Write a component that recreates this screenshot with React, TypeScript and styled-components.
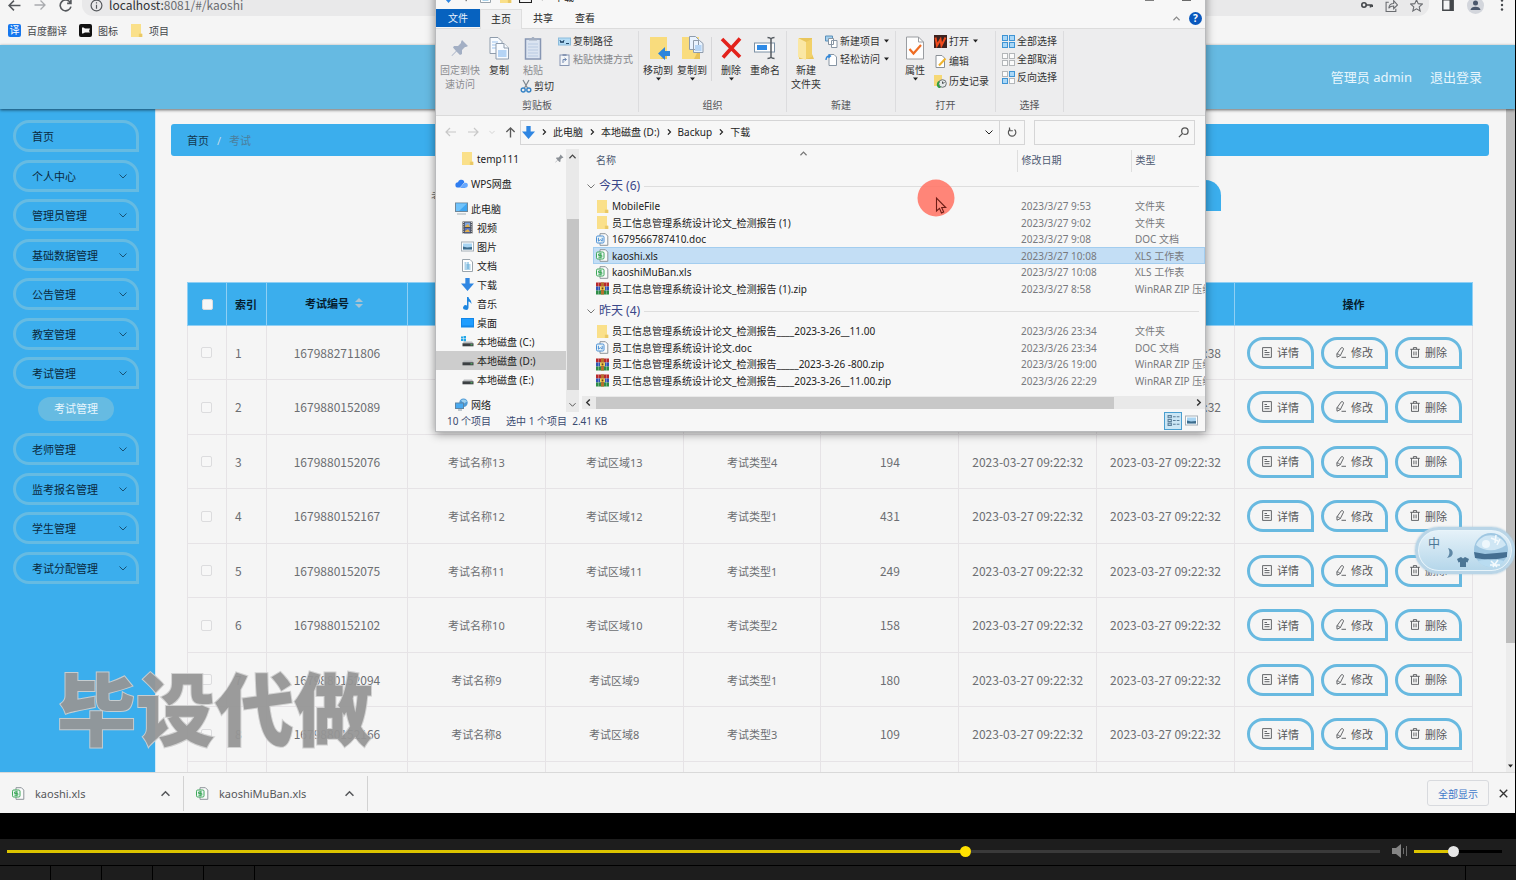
import React from "react";
import styled, { createGlobalStyle, css } from "styled-components";

const uiFont = `"Noto Sans", "Noto Sans CJK SC", sans-serif`;
const numberFont = `"Noto Sans CJK SC", "Noto Sans", sans-serif`;

const color = {
  page: "#f5f5f5",
  header: "#66bae2",
  blue: "#3baeed",
  ring: "#66bbe2",
  line: "#e6e3e6",
  text: "#6c6e72",
  win: "#f7f7f7",
};

const Global = createGlobalStyle`
  * { box-sizing: border-box; }
  html, body { margin: 0; padding: 0; background: #000; }
  body { font-family: ${uiFont}; font-size: 11px; color: #333; }
  button, input { font: inherit; color: inherit; margin: 0; padding: 0; }
  button { background: none; border: 0; }
  a { color: inherit; text-decoration: none; }
  ul, ol { list-style: none; margin: 0; padding: 0; }
  svg { display: block; flex: none; }
`;

/* ---------- page frame ---------- */

const Screen = styled.div`
  height: 100vh;
  display: flex;
  flex-direction: column;
  background: #000;
`;

const Stage = styled.div`
  position: relative;
  flex: 1;
  min-height: 0;
  overflow: hidden;
  display: flex;
  flex-direction: column;
  margin-right: 1px;
  background: ${color.page};
`;

/* ---------- browser ---------- */

const Toolbar = styled.div`
  flex: none;
  display: flex;
  align-items: center;
  height: 22px;
  margin-top: -6px;
  padding: 0 8px 0 8px;
  gap: 13px;
  color: #55585c;
`;

const AddressPill = styled.div`
  flex: 1;
  display: flex;
  align-items: center;
  gap: 6px;
  height: 22px;
  padding: 0 6px 0 8px;
  margin-left: -3px;
  border-radius: 0 0 11px 11px;
  background: #e9e9ea;
  font: 12px/16px ${numberFont};
  color: #6a6c70;
`;

const HostName = styled.span`
  color: #303235;
`;

const PillIcons = styled.div`
  margin-left: auto;
  display: flex;
  align-items: center;
  gap: 12px;
`;

const Avatar = styled.span`
  display: grid;
  place-items: center;
  width: 17px;
  height: 17px;
  border-radius: 50%;
  background: #d3d6dc;
  color: #49566b;
`;

const Bookmarks = styled.nav`
  flex: none;
  display: flex;
  align-items: center;
  gap: 12px;
  height: 29px;
  padding: 0 8px;
`;

const Bookmark = styled.a`
  display: flex;
  align-items: center;
  gap: 6px;
  font-size: 10px;
  color: #44474b;
`;

const AppHeader = styled.header`
  flex: none;
  position: relative;
  display: flex;
  align-items: center;
  justify-content: flex-end;
  gap: 18px;
  height: 64px;
  padding: 0 33px 2px 0;
  background: ${color.header};
  box-shadow: 0 1px 3px rgba(0, 0, 0, 0.6);
  color: #e8f6fd;
  font-size: 13px;
`;

const AppBody = styled.div`
  flex: 1;
  min-height: 0;
  display: flex;
  overflow: hidden;
`;

/* ---------- sidebar ---------- */

const Sidebar = styled.nav`
  flex: none;
  width: 156px;
  padding: 11px 16px 0 13px;
  background: ${color.blue};
  border-right: 1px solid #cfe9f8;
`;

const MenuItem = styled.li`
  margin-bottom: 8px;
  &:nth-child(even) {
    margin-bottom: 7px;
  }
`;

const MenuButton = styled.button`
  display: flex;
  align-items: center;
  justify-content: space-between;
  width: 100%;
  height: 32px;
  padding: 0 9px 1px 16px;
  border: 3px solid ${color.ring};
  border-radius: 16px 16px 0 16px;
  color: #0a2a40;
  & > svg {
    opacity: 0.7;
  }
`;

const SubLink = styled.a`
  display: block;
  width: 76px;
  height: 24px;
  margin: 6px auto 12px 25px;
  border-radius: 12px;
  background: ${color.ring};
  color: #e8f6fd;
  line-height: 24px;
  text-align: center;
`;

/* ---------- main column ---------- */

const Main = styled.main`
  flex: 1;
  min-width: 0;
  padding: 15px 17px 0 15px;
`;

const Crumbs = styled.div`
  display: flex;
  align-items: center;
  gap: 8px;
  height: 32px;
  padding: 0 16px;
  border-radius: 3px;
  background: ${color.blue};
  color: #4b7f9e;
`;

const CrumbHome = styled.a`
  color: #14384f;
`;

const CrumbSlash = styled.span`
  color: #c3dcea;
`;

const SearchForm = styled.form`
  display: flex;
  align-items: center;
  justify-content: center;
  gap: 12px;
  margin: 24px 8px 71px 0;
  height: 31px;
  color: ${color.text};
`;

const SearchField = styled.input`
  width: 660px;
  height: 31px;
  border: 1px solid #dcdfe6;
  background: #fff;
`;

const SearchButton = styled.button`
  width: 84px;
  height: 31px;
  border-radius: 16px 16px 0 16px;
  background: ${color.blue};
`;

const DataTable = styled.table`
  width: calc(100% - 32px);
  margin: 0 16px;
  table-layout: fixed;
  border-collapse: collapse;
  color: ${color.text};
  text-align: center;
`;

const HeadCell = styled.th<{ $left?: boolean }>`
  height: 43px;
  padding: 0 8px;
  background: ${color.blue};
  border: 1px solid #8fcff4;
  color: #06202f;
  text-align: ${(p) => (p.$left ? "left" : "center")};
  white-space: nowrap;
`;

const HeadLabel = styled.span`
  display: inline-flex;
  align-items: center;
  gap: 6px;
  padding: 0 6px 2px 0;
`;

const BodyRow = styled.tr`
  height: 54px;
  &:nth-child(even) {
    height: 55px;
  }
`;

const Cell = styled.td<{ $left?: boolean; $numeric?: boolean }>`
  padding: 0 8px;
  border: 1px solid ${color.line};
  text-align: ${(p) => (p.$left ? "left" : "center")};
  white-space: nowrap;
  ${(p) =>
    p.$numeric &&
    css`
      font: 12px/16px ${numberFont};
    `}
`;

const TickCell = styled(Cell)`
  padding: 0 10px 0 8px;
`;

const ActionCell = styled(Cell)`
  padding: 0 0 0 12px;
`;

const Tick = styled.input`
  appearance: none;
  display: block;
  width: 11px;
  height: 11px;
  margin: 0 auto;
  border: 1px solid #dcdcde;
  border-radius: 2px;
  background: #f7f7f7;
`;

const Actions = styled.div`
  display: flex;
  gap: 7px;
`;

const ActionButton = styled.button`
  display: flex;
  align-items: center;
  justify-content: center;
  gap: 5px;
  width: 67px;
  height: 32px;
  padding-bottom: 1px;
  border: 3px solid #68b9e0;
  border-radius: 16px 16px 0 16px;
  color: #55575a;
`;

const PageScroll = styled.div`
  flex: none;
  display: flex;
  flex-direction: column;
  justify-content: space-between;
  align-items: center;
  width: 9px;
  padding-bottom: 4px;
  background: #ececec;
  color: #444;
`;

const PageThumb = styled.div`
  width: 100%;
  height: 81%;
  background: #bdbdbd;
`;

/* ---------- downloads ---------- */

const Downloads = styled.footer`
  flex: none;
  display: flex;
  align-items: center;
  height: 41px;
  border-top: 1px solid #d9d9d9;
  padding-right: 7px;
`;

const DownloadItem = styled.button`
  display: flex;
  align-items: center;
  gap: 10px;
  width: 184px;
  height: 35px;
  padding: 0 13px 0 12px;
  border-right: 1px solid #d2d2d2;
  color: #55575a;
  & > :last-child {
    margin-left: auto;
  }
`;

const ShowAll = styled.button`
  width: 62px;
  height: 26px;
  margin: 0 10px 0 auto;
  border: 1px solid #d8dade;
  border-radius: 3px;
  font-size: 10px;
  color: #3f78c9;
`;

/* ---------- explorer window ---------- */

const Explorer = styled.section`
  position: absolute;
  left: 435px;
  top: -15px;
  width: 771px;
  height: 447px;
  display: flex;
  flex-direction: column;
  background: ${color.win};
  border: 1px solid #b9babc;
  box-shadow: 0 2px 9px rgba(0, 0, 0, 0.42);
  font-size: 10px;
  line-height: 14px;
  color: #222;
`;

const TitleBar = styled.div`
  flex: none;
  display: flex;
  align-items: center;
  gap: 7px;
  height: 23px;
  padding: 0 14px 2px 6px;
`;

const CaptionIcons = styled.span`
  display: flex;
  gap: 28px;
  margin-left: auto;
`;

const Tabs = styled.div`
  flex: none;
  display: flex;
  align-items: stretch;
  height: 20px;
  padding-right: 3px;
  border-bottom: 1px solid #dcdcdc;
`;

const Tab = styled.button<{ $kind?: "file" | "active" }>`
  width: 42px;
  padding-bottom: 2px;
  ${(p) =>
    p.$kind === "file" &&
    css`
      width: 44px;
      height: 18px;
      padding-bottom: 0;
      background: #0762bf;
      color: #e8f2fc;
    `}
  ${(p) =>
    p.$kind === "active" &&
    css`
      height: 20px;
      background: #efeff0;
      border: 1px solid #dedede;
      border-bottom: 0;
    `}
`;

const TabTools = styled.div`
  display: flex;
  align-items: center;
  gap: 9px;
  margin-left: auto;
  color: #8a8a8a;
`;

const Ribbon = styled.div`
  flex: none;
  display: flex;
  height: 87px;
  padding: 2px 0 3px;
  background: #ededee;
  border-bottom: 1px solid #dadada;
`;

const RibbonGroup = styled.div<{ $width: number }>`
  flex: none;
  display: flex;
  flex-direction: column;
  justify-content: space-between;
  width: ${(p) => p.$width}px;
  border-right: 1px solid #dcdcde;
`;

const RibbonTools = styled.div`
  display: flex;
  padding: 3px 0 0 2px;
`;

const GroupLabel = styled.div`
  text-align: center;
  color: #55565a;
`;

const BigTool = styled.button<{ $width?: number; $dim?: boolean }>`
  display: flex;
  flex-direction: column;
  align-items: center;
  width: ${(p) => p.$width ?? 34}px;
  color: ${(p) => (p.$dim ? "#8b8c90" : "#333")};
  line-height: 14px;
  white-space: nowrap;
  & > svg:first-child {
    margin: 2px 0 3px;
  }
`;

const ToolColumn = styled.div<{ $gap?: number; $inset?: number }>`
  display: flex;
  flex-direction: column;
  align-items: flex-start;
  gap: ${(p) => p.$gap ?? 4}px;
  padding-left: ${(p) => p.$inset ?? 2}px;
`;

const SmallTool = styled.button<{ $dim?: boolean; $indent?: boolean }>`
  display: flex;
  align-items: center;
  gap: 2px;
  height: 14px;
  padding-left: ${(p) => (p.$indent ? 4 : 0)}px;
  line-height: 14px;
  white-space: nowrap;
  color: ${(p) => (p.$dim ? "#85868a" : "#333")};
  & > span + svg {
    margin-left: 2px;
  }
`;

const ToolRule = styled.span`
  width: 1px;
  height: 44px;
  margin: 3px 2px 0;
  background: #d6d6d8;
`;

const AddressRow = styled.div`
  flex: none;
  display: flex;
  align-items: center;
  height: 33px;
  padding: 0 10px 1px 9px;
`;

const NavArrows = styled.div`
  display: flex;
  align-items: center;
  gap: 10px;
  width: 75px;
  color: #c8c8c8;
`;

const PathBox = styled.div`
  flex: 1;
  display: flex;
  align-items: center;
  gap: 6px;
  height: 25px;
  padding-left: 1px;
  border: 1px solid #d5d5d6;
`;

const PathSpring = styled.span`
  flex: 1;
`;

const Refresh = styled.button`
  display: grid;
  place-items: center;
  width: 25px;
  height: 25px;
  border-left: 1px solid #d5d5d6;
  color: #555;
`;

const FindBox = styled.label`
  display: flex;
  align-items: center;
  width: 161px;
  height: 25px;
  margin-left: 9px;
  padding-right: 5px;
  border: 1px solid #d5d5d6;
  color: #555;
`;

const FindInput = styled.input`
  flex: 1;
  min-width: 0;
  height: 20px;
  border: 0;
  background: none;
  outline: 0;
`;

const ExplorerBody = styled.div`
  flex: 1;
  min-height: 0;
  display: flex;
`;

const Tree = styled.ul`
  flex: none;
  width: 130px;
`;

const TreeItem = styled.li<{ $root?: boolean; $active?: boolean }>`
  display: flex;
  align-items: center;
  gap: 3px;
  height: 19px;
  margin-top: ${(p) => (p.$root ? 6 : 0)}px;
  padding: 0 2px 0 ${(p) => (p.$root ? 19 : 25)}px;
  background: ${(p) => (p.$active ? "#cdcdcd" : "none")};
  & > svg:nth-of-type(2) {
    margin-left: auto;
  }
`;

const TreeScroll = styled.div`
  flex: none;
  display: flex;
  flex-direction: column;
  align-items: center;
  justify-content: space-between;
  width: 13px;
  height: 263px;
  padding: 4px 0;
  background: #e9e9e9;
  color: #444;
`;

const TreeThumb = styled.div`
  width: 12px;
  height: 171px;
  margin-top: 48px;
  background: #c5c5c5;
`;

const FilePane = styled.div`
  flex: 1;
  min-width: 0;
  display: flex;
  flex-direction: column;
  justify-content: space-between;
  padding: 1px 0 2px 14px;
`;

const FileTable = styled.table`
  width: 100%;
  table-layout: fixed;
  border-collapse: collapse;
  text-align: left;
`;

const FileHead = styled.th<{ $first?: boolean }>`
  height: 22px;
  padding: 0 4px 2px ${(p) => (p.$first ? 3 : 4)}px;
  border-left: ${(p) => (p.$first ? "0" : "1px solid #dedede")};
  font-weight: 400;
  color: #4d5a72;
`;

const HeadSpread = styled.div`
  display: flex;
  align-items: center;
  height: 14px;
  padding-right: 22px;
  & > svg {
    margin: 0 auto 14px;
    color: #777;
  }
`;

const GroupCell = styled.td`
  height: 26px;
  padding: 2px 0 0;
`;

const GroupToggle = styled.button`
  display: flex;
  align-items: center;
  gap: 4px;
  width: 100%;
  margin-left: -6px;
  font-size: 12px;
  line-height: 16px;
  color: #3a4689;
  white-space: nowrap;
  & > svg {
    color: #777;
  }
  &::after {
    content: "";
    flex: 1;
    height: 1px;
    background: #dedede;
  }
`;

const FileRow = styled.tr<{ $selected?: boolean }>`
  height: 17px;
  background: ${(p) => (p.$selected ? "#c3def5" : "none")};
  box-shadow: ${(p) => (p.$selected ? "inset 0 0 0 1px #a3cdef" : "none")};
  &:nth-child(even) {
    height: 16px;
  }
`;

const FileName = styled.td`
  padding: 0 0 0 3px;
`;

const NameLine = styled.div`
  display: flex;
  align-items: center;
  gap: 3px;
  height: 16px;
  white-space: pre;
`;

const FileMeta = styled.td`
  padding: 0 0 0 4px;
  overflow: hidden;
  color: #77797d;
  line-height: 16px;
  white-space: nowrap;
`;

const FileScroll = styled.div`
  display: flex;
  align-items: center;
  height: 13px;
  margin-left: -11px;
  padding: 0 3px;
  background: #e9e9e9;
  color: #333;
  & > :last-child {
    margin-left: auto;
  }
`;

const FileThumb = styled.div`
  width: 518px;
  height: 12px;
  margin-left: 4px;
  background: #c8c8c8;
`;

const StatusBar = styled.div`
  flex: none;
  display: flex;
  align-items: center;
  height: 20px;
  padding: 0 7px 1px 11px;
  color: #3a4a70;
  white-space: pre;
`;

const StatusText = styled.span`
  margin-right: 15px;
`;

const ViewButtons = styled.div`
  display: flex;
  align-items: center;
  gap: 3px;
  margin-left: auto;
`;

const DetailsView = styled.button`
  display: grid;
  place-items: center;
  width: 18px;
  height: 18px;
  border: 1px solid #4a9fd0;
  background: #cbe6f5;
  color: #5b7f99;
`;

/* ---------- overlays ---------- */

const Pointer = styled.div`
  position: absolute;
  left: 917px;
  top: 179px;
`;

const Watermark = styled.div`
  position: absolute;
  left: 57px;
  bottom: 50px;
  font: 900 79px/114px "Noto Sans CJK SC", sans-serif;
  color: #969696;
  -webkit-text-stroke: 2px #cfcfcf;
  paint-order: stroke fill;
  opacity: 0.94;
`;

const ImeBar = styled.div`
  position: absolute;
  right: 0;
  top: 527px;
  display: flex;
  align-items: center;
  width: 100px;
  height: 47px;
  padding-left: 14px;
  border: 3px solid #b9d5e7;
  border-radius: 24px;
  background: linear-gradient(#e6f2f9, #b4d6ea);
  box-shadow: inset 0 0 0 1px #e8f4fa, 0 0 2px #9fc1d6;
  color: #4c7695;
  overflow: hidden;
`;

const ImeMode = styled.span`
  margin: -16px 1px 0 -4px;
  font-size: 12px;
`;

/* ---------- player ---------- */

const PlayerGap = styled.div`
  flex: none;
  height: 26px;
`;

const PlayerBar = styled.div`
  flex: none;
  display: flex;
  align-items: center;
  height: 26px;
  padding: 0 14px 2px 7px;
  background: #1d1d1d;
`;

const Slider = styled.input<{ $fill: number; $rest: string; $knob: string }>`
  appearance: none;
  height: 12px;
  background: none;
  outline: 0;
  &::-webkit-slider-runnable-track {
    height: 3px;
    background: linear-gradient(
      to right,
      #dcc400 ${(p) => p.$fill}%,
      ${(p) => p.$rest} ${(p) => p.$fill}%
    );
  }
  &::-webkit-slider-thumb {
    appearance: none;
    width: 11px;
    height: 11px;
    margin-top: -4px;
    border-radius: 50%;
    background: ${(p) => p.$knob};
  }
`;

const Progress = styled(Slider)`
  flex: 1;
`;

const Volume = styled(Slider)`
  width: 88px;
  margin-left: 6px;
`;

const VolumeIcon = styled.span`
  margin-left: 12px;
`;

const PlayerFoot = styled.div`
  flex: none;
  display: flex;
  gap: 1px;
  height: 15px;
  padding-top: 1px;
`;

const FootCell = styled.div<{ $grow?: boolean }>`
  ${(p) => (p.$grow ? "flex: 1;" : "width: 50px;")}
  background: #1d1d1d;
`;

/* ---------- icons ---------- */

const Line = ({ d, size = 12, w = 1, box = 12 }: { d: string; size?: number; w?: number; box?: number }) => (
  <svg width={size} height={size} viewBox={`0 0 ${box} ${box}`} fill="none" stroke="currentColor" strokeWidth={w}>
    <path d={d} />
  </svg>
);

const ChevronDown = ({ size = 8 }: { size?: number }) => <Line size={size} box={8} d="M0.5 2.5 4 6 7.5 2.5" />;
const ChevronUp = ({ size = 8 }: { size?: number }) => <Line size={size} box={8} w={1.4} d="M0.5 6 4 2.5 7.5 6" />;
const ChevronRight = ({ size = 6 }: { size?: number }) => <Line size={size} box={8} w={1.6} d="M2.5 0.5 6 4 2.5 7.5" />;
const ChevronLeft = ({ size = 8 }: { size?: number }) => <Line size={size} box={8} w={1.6} d="M5.5 0.5 2 4 5.5 7.5" />;
const Drop = () => (
  <svg width="5" height="4" viewBox="0 0 5 4">
    <path d="M0 0.5h5L2.5 3.5z" fill="#222" />
  </svg>
);

const Folder = ({ size = 12 }: { size?: number }) => (
  <svg width={size} height={size} viewBox="0 0 12 12">
    <path d="M1 0h9v9h1.5v3H1z" fill="#f6d875" />
    <path d="M1 0h9v9H8v3H1z" fill="#fae08a" />
    <path d="M8.500 12V9h2.500v3z" fill="#e9c765" />
  </svg>
);

const OfficeFile = ({ tint, word }: { tint: string; word?: boolean }) => (
  <svg width="13" height="13" viewBox="0 0 13 13" fill="none">
    <path d="M4 .7h5.4l2.4 2.4v9.2H4z" fill="#fbfbfb" stroke="#8d9499" />
    <rect x="0.5" y="3" width="7.5" height="7" rx="1.2" fill="#eef6f6" stroke={tint} />
    <path d={word ? "M2.4 4.8v3.4l1.9-1.5 1.9 1.5V4.8" : "M6 5H2.6v1.5h3.2v1.7H2.4M4.2 4v5.2"} stroke={tint} />
  </svg>
);

const RarFile = () => (
  <svg width="13" height="13" viewBox="0 0 13 13">
    <rect x="0" y="0.5" width="13" height="4" fill="#b8292b" />
    <rect x="0" y="4.5" width="13" height="4" fill="#3154b5" />
    <rect x="0" y="8.5" width="13" height="4" fill="#2f8d46" />
    <rect x="5" y="0.5" width="3" height="12" fill="#b5702c" />
    <rect x="4" y="4.5" width="5" height="3.5" fill="#f1d35a" />
    <rect x="5.6" y="5.4" width="1.8" height="2" fill="#704018" />
    <path d="M2.5.5v12M10.5.5v12" stroke="#fff" strokeOpacity=".3" />
  </svg>
);

const DownArrow = ({ size = 13 }: { size?: number }) => (
  <svg width={size} height={size} viewBox="0 0 12 12">
    <path d="M4 0h4v5h4L6 12 0 5h4z" fill="#2f86e2" />
  </svg>
);

const Cloud = () => (
  <svg width="13" height="13" viewBox="0 0 13 13">
    <path d="M3 10.5a2.6 2.6 0 0 1 0-5.2A3.4 3.4 0 0 1 9 4l1 7z" fill="#2f7df0" />
    <path d="M6 10.8 9 6.2a2.4 2.4 0 0 1 3.8 2.4 2.2 2.2 0 0 1-2 2.2z" fill="#67a9ff" />
    <path d="M4.500 10.800c2-.3 2.500-3.300 4.500-4.800" stroke="#f7f7f7" strokeWidth=".6" fill="none" />
  </svg>
);

const Monitor = () => (
  <svg width="13" height="13" viewBox="0 0 13 13">
    <rect x="0.5" y="1" width="12" height="8.500" fill="#3ea6f2" stroke="#6f8799" />
    <path d="M1 1.500h11L4 9H1z" fill="#70c3fb" />
    <path d="M2 11.500h9v1H2z" fill="#a4b0b9" />
  </svg>
);

const Video = () => (
  <svg width="13" height="13" viewBox="0 0 13 13">
    <rect x="1.500" y="0.500" width="10" height="12" fill="#4a4d55" />
    <rect x="3.800" y="1.500" width="5.400" height="4.500" fill="#7fa5e0" />
    <rect x="3.800" y="7" width="5.400" height="4.500" fill="#5573c4" />
    <path d="M5 4.500l2-1.500 2 3H4zM4 10l3-2 2 3H4z" fill="#e4b04c" />
    <path d="M2.600 1v12M10.400 1v12" stroke="#d6d8dc" strokeDasharray="1 1.200" />
  </svg>
);

const Picture = () => (
  <svg width="13" height="13" viewBox="0 0 13 13">
    <rect x="0.500" y="2" width="12" height="9" fill="#fff" stroke="#a6b0b8" />
    <rect x="2" y="3.500" width="9" height="6" fill="#a8d4f2" />
    <path d="M2 6.500l4 1 5-.5v2.500H2z" fill="#3d6c8c" />
  </svg>
);

const Doc = () => (
  <svg width="13" height="13" viewBox="0 0 13 13" fill="none">
    <path d="M1.500.500h7.500l2.500 2.500v9.500h-10z" fill="#fff" stroke="#9aa4ac" />
    <path d="M3.500 4h2M3.500 6h6M3.500 8h6M3.500 10h6M7 3v7" stroke="#5ba7d6" />
  </svg>
);

const Note = () => (
  <svg width="13" height="13" viewBox="0 0 13 13">
    <path d="M6 0h1.500c.3 2.500 3.500 3 2.800 7-.5-1.800-1.600-2.300-2.800-2.600v6.100a2.700 2.300 0 1 1-1.500-2z" fill="#1e86e0" />
  </svg>
);

const Desktop = () => (
  <svg width="13" height="13" viewBox="0 0 13 13">
    <rect x="0" y="2" width="13" height="9.500" fill="#1286e8" />
    <path d="M1 3h11v6.500H1z" fill="#1f9dff" />
  </svg>
);

const Drive = ({ win }: { win?: boolean }) => (
  <svg width="13" height="13" viewBox="0 0 13 13">
    <path d="M3 6.500h8l1.500 2H1.500z" fill="#b9bcbf" />
    <rect x="1.500" y="8.300" width="11" height="3" fill="#3c4043" />
    <rect x="9.500" y="9.300" width="2" height="1" fill="#58c86c" />
    {win && <path d="M0 1.500h2v2H0zM2.500 1h2.500v2.500H2.500zM0 4h2v2H0zM2.500 4h2.500v2.300H2.500z" fill="#21a6e8" />}
  </svg>
);

const Network = () => (
  <svg width="13" height="13" viewBox="0 0 13 13">
    <circle cx="8.500" cy="4.800" r="4.200" fill="#4f9bd6" />
    <path d="M6 2.500c2-2 5-1 6 1l-3 2z" fill="#9fd0ee" />
    <rect x="0.500" y="5" width="8" height="5.500" fill="#48a9f0" stroke="#5c85a5" />
    <path d="M3 12h4" stroke="#8497a5" />
  </svg>
);

const Pin = ({ size = 9, fill = "#8d9298" }: { size?: number; fill?: string }) => (
  <svg width={size} height={size} viewBox="0 0 18 18">
    <path d="M11 1l6 6-2 1-1 0-3 3 0 4-2 1-3.500-3.500L1 17l-.5-.5L5 12 2 8.500 3 7l4 0 3-3 0-1z" fill={fill} />
  </svg>
);

const BigPin = () => (
  <svg width="24" height="24" viewBox="0 0 24 24">
    <path d="M14 4l6 6-2 1-1 0-3 3 0 4-2 1-3.500-3.500L4 20l-.5-.5L8 15 5 11.500 6 10l4 0 3-3 0-1z" fill="#a3afc4" />
  </svg>
);

const CopyIcon = () => (
  <svg width="24" height="24" viewBox="0 0 24 24" fill="#f8fbff" stroke="#8f9cac">
    <path d="M3 1.500h8l4 4v12H3z" />
    <path d="M5 6h6M5 9h6M5 12h4" stroke="#9bc1ec" />
    <path d="M9 7.500h8l4.500 4.500v11H9z" />
    <path d="M11 14h8.500v7H11z" fill="#b5d4f5" stroke="none" />
    <path d="M17 7.500v4.500h4.500" />
  </svg>
);

const PasteIcon = () => (
  <svg width="24" height="24" viewBox="0 0 24 24" fill="none">
    <rect x="4.500" y="3" width="15" height="20" fill="#dbe4f1" stroke="#8796b3" strokeWidth="1.500" />
    <path d="M8 4.500V2.500h2.500c0-2 3-2 3 0H16v2z" fill="#a3aec0" />
    <path d="M7 8h10M7 11h10M7 14h10M7 17h10M7 20h10" stroke="#b9cae2" />
  </svg>
);

const PathIcon = () => (
  <svg width="13" height="13" viewBox="0 0 13 13">
    <rect x="0.500" y="3" width="12" height="7" fill="#b5dcf5" stroke="#8cbcdc" />
    <path d="M2 5l1 3 1-2 1 2 1-3M8 8.500h3" stroke="#24486a" fill="none" />
  </svg>
);

const LinkIcon = () => (
  <svg width="13" height="13" viewBox="0 0 13 13" fill="none">
    <rect x="2" y="2" width="9" height="10.500" fill="#f3f5f8" stroke="#8796b3" />
    <path d="M4.500 1h4v2h-4z" fill="#8796b3" />
    <path d="M5 10V6.500h3M6.500 5l2 1.500-2 1.500" stroke="#6c85ae" />
  </svg>
);

const Scissors = () => (
  <svg width="12" height="14" viewBox="0 0 12 14" fill="none">
    <path d="M3 1l4.500 8M9 1L4.500 9" stroke="#7d868e" strokeWidth="1.200" />
    <circle cx="3.200" cy="11" r="2" stroke="#3583c6" strokeWidth="1.400" />
    <circle cx="8.800" cy="11" r="2" stroke="#3583c6" strokeWidth="1.400" />
  </svg>
);

const MoveIcon = () => (
  <svg width="24" height="24" viewBox="0 0 24 24">
    <path d="M4 1h17v22H4z" fill="#f9dc7d" />
    <path d="M18 17h3v6h-6z" fill="#e7c25a" />
    <path d="M24 15h-5v-4l-7 6.500 7 6.500v-4h5z" fill="#2e86dc" />
  </svg>
);

const CopyToIcon = () => (
  <svg width="24" height="24" viewBox="0 0 24 24">
    <path d="M2 1h17v22H2z" fill="#f9dc7d" />
    <path d="M17 17h3v6h-6z" fill="#e7c25a" />
    <path d="M9.500.500h6l3 3v10h-9zM13.500 4.500h6l3.500 3v9h-9.500z" fill="#e9f3ff" stroke="#8f9cac" />
    <path d="M15 9h6.500v6H15z" fill="#b5d4f5" />
  </svg>
);

const DeleteX = () => (
  <svg width="24" height="24" viewBox="0 0 24 24">
    <path d="M3 3l18 18M21 2.500L4 21.500" stroke="#e3221b" strokeWidth="3.600" />
  </svg>
);

const RenameIcon = () => (
  <svg width="24" height="24" viewBox="0 0 24 24" fill="none">
    <rect x="1.500" y="7" width="20" height="9" fill="#fff" stroke="#7b90a4" />
    <rect x="4" y="9" width="10" height="5" fill="#2e8ae6" />
    <path d="M14.500 1.500c2 0 3 .5 3.500 1.500.5-1 1.500-1.500 3.500-1.500M18 3v18M14.500 22.500c2 0 3-.5 3.500-1.500.5 1 1.500 1.500 3.500 1.500" stroke="#555b61" strokeWidth="1.500" />
  </svg>
);

const NewFolder = () => (
  <svg width="24" height="24" viewBox="0 0 24 24">
    <path d="M5 2h13v16l2 5H5z" fill="#e9c65c" />
    <path d="M4 2l8 4v18l-8-3z" fill="#fae7a4" />
    <path d="M12 6l6-3v18l-6 2z" fill="#f2d169" />
  </svg>
);

const NewItem = () => (
  <svg width="13" height="13" viewBox="0 0 13 13" fill="#fff" stroke="#8795a3">
    <path d="M.500 1h7v5h-7z" fill="#a5d0ee" stroke="#5a8fb8" />
    <path d="M3.500 3.500h5v6h-5zM6.500 5.500h5.500v7H6.500z" />
  </svg>
);

const EasyAccess = () => (
  <svg width="13" height="13" viewBox="0 0 13 13" fill="none">
    <path d="M4 1.500h5l2.500 2.500v8.500H4z" fill="#fff" stroke="#8795a3" />
    <path d="M1 7c0-3 1-4 4-4M3.500 1.500L5.500 3 3.500 4.800" stroke="#2f86d8" strokeWidth="1.300" />
  </svg>
);

const PropertiesIcon = () => (
  <svg width="24" height="24" viewBox="0 0 24 24" fill="none">
    <path d="M3.500 1h12l5 5v17h-17z" fill="#fdfdfd" stroke="#9a9da1" />
    <path d="M15.500 1v5h5" stroke="#9a9da1" />
    <path d="M6.500 13l4 4.500L18 9" stroke="#ef6c23" strokeWidth="2.200" />
  </svg>
);

const WpsIcon = () => (
  <svg width="13" height="13" viewBox="0 0 13 13">
    <rect width="13" height="13" fill="#3c2320" />
    <path d="M1.500 2.500l1.500 8 3.500-6 1 6 4-8" stroke="#f14a1c" strokeWidth="2" fill="none" />
  </svg>
);

const EditIcon = () => (
  <svg width="13" height="13" viewBox="0 0 13 13" fill="none">
    <path d="M2 .500h6l2.500 2.500v9.500H2z" fill="#fff" stroke="#8b9197" />
    <path d="M5 10.500l6.500-7" stroke="#efb42f" strokeWidth="2" />
  </svg>
);

const HistoryIcon = () => (
  <svg width="13" height="13" viewBox="0 0 13 13" fill="none">
    <path d="M0 0h8v11H0z" fill="#f6d875" />
    <circle cx="8.500" cy="8.500" r="3.800" fill="#e5e9ea" stroke="#6b7276" />
    <path d="M8.500 6.500v2l2-1" stroke="#4a5054" />
    <path d="M6.500 12.500C3.500 12 3 9 5 6.500" stroke="#2e9e44" strokeWidth="2" />
  </svg>
);

const SelectIcon = ({ fills }: { fills: string[] }) => (
  <svg width="13" height="13" viewBox="0 0 13 13">
    {fills.map((f, i) => (
      <rect
        key={i}
        x={(i % 2) * 7 + 0.5}
        y={Math.floor(i / 2) * 7 + 0.5}
        width="5"
        height="5"
        fill={f}
        stroke={f === "#fbfbfb" ? "#b3b6b9" : "#3f94d4"}
      />
    ))}
  </svg>
);

const DetailIcon = () => (
  <svg width="10" height="11" viewBox="0 0 10 11" fill="none" stroke="currentColor" strokeWidth=".9">
    <path d="M.600.600h8.800v9.800H.600zM2.500 3.500h2.500M2.500 5.500h5M2.500 7.700h5" />
  </svg>
);
const PencilIcon = () => (
  <svg width="10" height="11" viewBox="0 0 10 11" fill="none" stroke="currentColor" strokeWidth=".9">
    <path d="M5.300.800c1-.6 2.400.2 2.200 1.400L4.300 8.600 1 10.200.900 6.900zM.900 6.900c1.200 0 2.500.5 3.400 1.700M5.500 10.300h4.500" />
  </svg>
);
const TrashIcon = () => (
  <svg width="10" height="11" viewBox="0 0 10 11" fill="none" stroke="currentColor" strokeWidth=".9">
    <path d="M.200 2.300h9.600M1.500 2.300v8.100h7V2.300M3.400 2.300V.600h3.200v1.700M3.900 4.500v3.800M6.100 4.500v3.800" />
  </svg>
);

/* ---------- data ---------- */

const menuTop = ["首页", "个人中心", "管理员管理", "基础数据管理", "公告管理", "教室管理", "考试管理"];
const menuBottom = ["老师管理", "监考报名管理", "学生管理", "考试分配管理"];

const stamp = "2023-03-27 09:22:32";
type Exam = { id: string; name: string; area: string; kind: string; count: string; start: string; end: string };
const exams: Exam[] = [
  { id: "1679882711806", name: "", area: "", kind: "", count: "", start: "", end: "2023-03-27 10:08:38" },
  { id: "1679880152089", name: "", area: "", kind: "", count: "", start: "", end: stamp },
  { id: "1679880152076", name: "考试名称13", area: "考试区域13", kind: "考试类型4", count: "194", start: stamp, end: stamp },
  { id: "1679880152167", name: "考试名称12", area: "考试区域12", kind: "考试类型1", count: "431", start: stamp, end: stamp },
  { id: "1679880152075", name: "考试名称11", area: "考试区域11", kind: "考试类型1", count: "249", start: stamp, end: stamp },
  { id: "1679880152102", name: "考试名称10", area: "考试区域10", kind: "考试类型2", count: "158", start: stamp, end: stamp },
  { id: "1679880152094", name: "考试名称9", area: "考试区域9", kind: "考试类型1", count: "180", start: stamp, end: stamp },
  { id: "1679880152166", name: "考试名称8", area: "考试区域8", kind: "考试类型3", count: "109", start: stamp, end: stamp },
];

type Kind = "folder" | "doc" | "xls" | "zip";
type FileEntry = { kind: Kind; name: string; date: string; selected?: boolean };
const typeNames: Record<Kind, string> = {
  folder: "文件夹",
  doc: "DOC 文档",
  xls: "XLS 工作表",
  zip: "WinRAR ZIP 压缩",
};
const fileGroups: { title: string; files: FileEntry[] }[] = [
  {
    title: "今天 (6)",
    files: [
      { kind: "folder", name: "MobileFile", date: "2023/3/27 9:53" },
      { kind: "folder", name: "员工信息管理系统设计论文_检测报告 (1)", date: "2023/3/27 9:02" },
      { kind: "doc", name: "1679566787410.doc", date: "2023/3/27 9:08" },
      { kind: "xls", name: "kaoshi.xls", date: "2023/3/27 10:08", selected: true },
      { kind: "xls", name: "kaoshiMuBan.xls", date: "2023/3/27 10:08" },
      { kind: "zip", name: "员工信息管理系统设计论文_检测报告 (1).zip", date: "2023/3/27 8:58" },
    ],
  },
  {
    title: "昨天 (4)",
    files: [
      { kind: "folder", name: "员工信息管理系统设计论文_检测报告____2023-3-26__11.00", date: "2023/3/26 23:34" },
      { kind: "doc", name: "员工信息管理系统设计论文.doc", date: "2023/3/26 23:34" },
      { kind: "zip", name: "员工信息管理系统设计论文_检测报告_____2023-3-26 -800.zip", date: "2023/3/26 19:00" },
      { kind: "zip", name: "员工信息管理系统设计论文_检测报告____2023-3-26__11.00.zip", date: "2023/3/26 22:29" },
    ],
  },
];

const FileIcon = ({ kind }: { kind: Kind }) => {
  if (kind === "folder") return <Folder size={13} />;
  if (kind === "doc") return <OfficeFile tint="#4a8fd6" word />;
  if (kind === "xls") return <OfficeFile tint="#3fa85a" />;
  return <RarFile />;
};

const tree: { label: string; icon: React.ReactNode; root?: boolean; active?: boolean; pinned?: boolean }[] = [
  { label: "temp111", icon: <Folder size={13} />, pinned: true },
  { label: "WPS网盘", icon: <Cloud />, root: true },
  { label: "此电脑", icon: <Monitor />, root: true },
  { label: "视频", icon: <Video /> },
  { label: "图片", icon: <Picture /> },
  { label: "文档", icon: <Doc /> },
  { label: "下载", icon: <DownArrow /> },
  { label: "音乐", icon: <Note /> },
  { label: "桌面", icon: <Desktop /> },
  { label: "本地磁盘 (C:)", icon: <Drive win /> },
  { label: "本地磁盘 (D:)", icon: <Drive />, active: true },
  { label: "本地磁盘 (E:)", icon: <Drive /> },
  { label: "网络", icon: <Network />, root: true },
];

/* ---------- sections ---------- */

const BrowserChrome = () => (
  <>
    <Toolbar>
      <Line size={13} w={1.4} d="M11.500 6H1M5.500 1.500 1 6l4.500 4.500" />
      <svg width="12" height="12" viewBox="0 0 12 12" fill="none" stroke="#a9abae" strokeWidth="1.300">
        <path d="M.500 6H11M6.500 1.500 11 6l-4.500 4.500" />
      </svg>
      <Line size={13} w={1.500} d="M10.500 3.500A5 5 0 1 0 11 7M11 .500V4H7.500" />
      <AddressPill>
        <svg width="13" height="13" viewBox="0 0 12 12" fill="none" stroke="#55585c" strokeWidth="1.100">
          <circle cx="6" cy="6" r="5" />
          <path d="M6 5.200V9M6 3v1.200" />
        </svg>
        <span>
          <HostName>localhost:</HostName>8081/#/kaoshi
        </span>
        <PillIcons>
          <svg width="12" height="12" viewBox="0 0 12 12" fill="none" stroke="#44474b" strokeWidth="1.600">
            <circle cx="3" cy="6" r="2.200" />
            <path d="M5 6h6.500M9.500 6v2.500M11.200 6v2" />
          </svg>
          <Line size={13} d="M3.500 3H1v8.500h9V9M3.500 8.500c.3-3 2-4.300 4.500-4.300V1.500l3.500 4L8 9V6.500c-2 0-3.500.500-4.500 2z" />
          <Line size={13} d="M6 .800 7.600 4.300l3.800.4-2.900 2.600.9 3.800L6 9.100l-3.400 2 .9-3.800L.600 4.700l3.800-.4z" />
        </PillIcons>
      </AddressPill>
      <svg width="12" height="12" viewBox="0 0 12 12">
        <path d="M.800.800h10.400v10.400H.800z" fill="none" stroke="#44474b" strokeWidth="1.400" />
        <path d="M7.500 1H11v10H7.500z" fill="#44474b" />
      </svg>
      <Avatar>
        <svg width="11" height="11" viewBox="0 0 11 11" fill="currentColor">
          <circle cx="5.500" cy="3" r="2.500" />
          <path d="M.500 10c0-4.500 10-4.500 10 0z" />
        </svg>
      </Avatar>
      <svg width="10" height="14" viewBox="0 0 10 14" fill="#44474b">
        <circle cx="5" cy="2.500" r="1.200" />
        <circle cx="5" cy="7" r="1.200" />
        <circle cx="5" cy="11.500" r="1.200" />
      </svg>
    </Toolbar>
    <Bookmarks>
      <Bookmark href="#">
        <svg width="13" height="13" viewBox="0 0 13 13">
          <rect width="13" height="13" rx="2" fill="#1677ee" />
          <text x="6.500" y="10.300" fontSize="10" fill="#fff" textAnchor="middle">译</text>
        </svg>
        百度翻译
      </Bookmark>
      <Bookmark href="#">
        <svg width="13" height="13" viewBox="0 0 13 13">
          <rect width="13" height="13" rx="2" fill="#111" />
          <path d="M3 9.500V3.500h1.500l1.500 1h5l-1 2.500 1 1.500H6L4 9.500z" fill="#f5f5f5" />
        </svg>
        图标
      </Bookmark>
      <Bookmark href="#">
        <Folder size={13} />
        项目
      </Bookmark>
    </Bookmarks>
  </>
);

const SideMenu = () => (
  <Sidebar>
    <ul>
      {menuTop.map((label, i) => (
        <MenuItem key={label}>
          <MenuButton>
            {label}
            {i > 0 && <ChevronDown />}
          </MenuButton>
        </MenuItem>
      ))}
    </ul>
    <SubLink href="#">考试管理</SubLink>
    <ul>
      {menuBottom.map((label) => (
        <MenuItem key={label}>
          <MenuButton>
            {label}
            <ChevronDown />
          </MenuButton>
        </MenuItem>
      ))}
    </ul>
  </Sidebar>
);

const ExamTable = () => (
  <DataTable>
    <colgroup>
      <col style={{ width: 39 }} />
      <col style={{ width: 40 }} />
      <col style={{ width: 141 }} />
      <col span={6} />
      <col style={{ width: 238 }} />
    </colgroup>
    <thead>
      <tr>
        <HeadCell>
          <Tick type="checkbox" />
        </HeadCell>
        <HeadCell $left>索引</HeadCell>
        <HeadCell>
          <HeadLabel>
            考试编号
            <svg width="8" height="10" viewBox="0 0 8 10" fill="#a9c3d3">
              <path d="M4 0l4 4H0zM4 10l4-4H0z" />
            </svg>
          </HeadLabel>
        </HeadCell>
        <HeadCell />
        <HeadCell />
        <HeadCell />
        <HeadCell />
        <HeadCell />
        <HeadCell />
        <HeadCell>操作</HeadCell>
      </tr>
    </thead>
    <tbody>
      {exams.map((e, i) => (
        <BodyRow key={e.id}>
          <TickCell>
            <Tick type="checkbox" />
          </TickCell>
          <Cell $left $numeric>{i + 1}</Cell>
          <Cell $numeric>{e.id}</Cell>
          <Cell>{e.name}</Cell>
          <Cell>{e.area}</Cell>
          <Cell>{e.kind}</Cell>
          <Cell $numeric>{e.count}</Cell>
          <Cell $numeric>{e.start}</Cell>
          <Cell $numeric>{e.end}</Cell>
          <ActionCell>
            <Actions>
              <ActionButton><DetailIcon />详情</ActionButton>
              <ActionButton><PencilIcon />修改</ActionButton>
              <ActionButton><TrashIcon />删除</ActionButton>
            </Actions>
          </ActionCell>
        </BodyRow>
      ))}
      <BodyRow>
        {Array.from({ length: 10 }, (_, i) => (
          <Cell key={i} />
        ))}
      </BodyRow>
    </tbody>
  </DataTable>
);

const ExplorerRibbon = () => (
  <Ribbon>
    <RibbonGroup $width={203}>
      <RibbonTools>
        <BigTool $width={44} $dim>
          <BigPin />
          <span>固定到快</span>
          <span>速访问</span>
        </BigTool>
        <BigTool>
          <CopyIcon />
          <span>复制</span>
        </BigTool>
        <ToolColumn $gap={2} $inset={0}>
          <BigTool $dim>
            <PasteIcon />
            <span>粘贴</span>
          </BigTool>
          <SmallTool $indent>
            <Scissors />
            剪切
          </SmallTool>
        </ToolColumn>
        <ToolColumn $inset={4}>
          <SmallTool>
            <PathIcon />
            复制路径
          </SmallTool>
          <SmallTool $dim>
            <LinkIcon />
            粘贴快捷方式
          </SmallTool>
        </ToolColumn>
      </RibbonTools>
      <GroupLabel>剪贴板</GroupLabel>
    </RibbonGroup>
    <RibbonGroup $width={148}>
      <RibbonTools>
        <BigTool>
          <MoveIcon />
          <span>移动到</span>
          <Drop />
        </BigTool>
        <BigTool>
          <CopyToIcon />
          <span>复制到</span>
          <Drop />
        </BigTool>
        <ToolRule />
        <BigTool>
          <DeleteX />
          <span>删除</span>
          <Drop />
        </BigTool>
        <BigTool>
          <RenameIcon />
          <span>重命名</span>
        </BigTool>
      </RibbonTools>
      <GroupLabel>组织</GroupLabel>
    </RibbonGroup>
    <RibbonGroup $width={109}>
      <RibbonTools>
        <BigTool>
          <NewFolder />
          <span>新建</span>
          <span>文件夹</span>
        </BigTool>
        <ToolColumn>
          <SmallTool>
            <NewItem />
            <span>新建项目</span>
            <Drop />
          </SmallTool>
          <SmallTool>
            <EasyAccess />
            <span>轻松访问</span>
            <Drop />
          </SmallTool>
        </ToolColumn>
      </RibbonTools>
      <GroupLabel>新建</GroupLabel>
    </RibbonGroup>
    <RibbonGroup $width={100}>
      <RibbonTools>
        <BigTool>
          <PropertiesIcon />
          <span>属性</span>
          <Drop />
        </BigTool>
        <ToolColumn $gap={6}>
          <SmallTool>
            <WpsIcon />
            <span>打开</span>
            <Drop />
          </SmallTool>
          <SmallTool>
            <EditIcon />
            编辑
          </SmallTool>
          <SmallTool>
            <HistoryIcon />
            历史记录
          </SmallTool>
        </ToolColumn>
      </RibbonTools>
      <GroupLabel>打开</GroupLabel>
    </RibbonGroup>
    <RibbonGroup $width={68}>
      <RibbonTools>
        <ToolColumn $inset={4}>
          <SmallTool>
            <SelectIcon fills={["#a9d7f7", "#a9d7f7", "#a9d7f7", "#a9d7f7"]} />
            全部选择
          </SmallTool>
          <SmallTool>
            <SelectIcon fills={["#fbfbfb", "#fbfbfb", "#fbfbfb", "#fbfbfb"]} />
            全部取消
          </SmallTool>
          <SmallTool>
            <SelectIcon fills={["#fbfbfb", "#a9d7f7", "#a9d7f7", "#fbfbfb"]} />
            反向选择
          </SmallTool>
        </ToolColumn>
      </RibbonTools>
      <GroupLabel>选择</GroupLabel>
    </RibbonGroup>
  </Ribbon>
);

const ExplorerWindow = () => (
  <Explorer>
    <TitleBar>
      <DownArrow />
      <Line size={10} d="M5 1v10" />
      <Doc />
      <Folder size={13} />
      <Line size={13} d="M.500.500h11v11H.500z" />
      <Line size={8} d="M5 1v10" />
      下载
      <CaptionIcons>
        <Line size={9} d="M0 11h12" />
        <Line size={9} d="M.500.500h11v11H.500z" />
      </CaptionIcons>
    </TitleBar>
    <Tabs>
      <Tab $kind="file">文件</Tab>
      <Tab $kind="active">主页</Tab>
      <Tab>共享</Tab>
      <Tab>查看</Tab>
      <TabTools>
        <ChevronUp size={7} />
        <svg width="13" height="13" viewBox="0 0 13 13">
          <circle cx="6.500" cy="6.500" r="6.500" fill="#0a58bd" />
          <text x="6.500" y="10.200" fontSize="10" fontWeight="700" fill="#fff" textAnchor="middle">?</text>
        </svg>
      </TabTools>
    </Tabs>
    <ExplorerRibbon />
    <AddressRow>
      <NavArrows>
        <Line size={12} w={1.2} d="M11 6H1.500M5 2 1 6l4 4" />
        <Line size={12} w={1.2} d="M1 6h9.500M7 2l4 4-4 4" />
        <ChevronDown size={6} />
        <svg width="11" height="12" viewBox="0 0 12 12" fill="none" stroke="#5a5a5a" strokeWidth="1.500">
          <path d="M6 12V1.500M1.500 6 6 1.500 10.500 6" />
        </svg>
      </NavArrows>
      <PathBox>
        <DownArrow />
        <ChevronRight />
        <span>此电脑</span>
        <ChevronRight />
        <span>本地磁盘 (D:)</span>
        <ChevronRight />
        <span>Backup</span>
        <ChevronRight />
        <span>下载</span>
        <PathSpring />
        <ChevronDown />
        <Refresh>
          <Line size={10} w={1.4} d="M9 3A4.500 4.500 0 1 1 4 2.500M3 .500V4.500H7" />
        </Refresh>
      </PathBox>
      <FindBox>
        <FindInput type="text" />
        <svg width="11" height="11" viewBox="0 0 12 12" fill="none" stroke="currentColor" strokeWidth="1.400">
          <circle cx="7.500" cy="4.500" r="3.500" />
          <path d="M5 7 1 11" />
        </svg>
      </FindBox>
    </AddressRow>
    <ExplorerBody>
      <Tree>
        {tree.map((t) => (
          <TreeItem key={t.label} $root={t.root} $active={t.active}>
            {t.icon}
            {t.label}
            {t.pinned && <Pin />}
          </TreeItem>
        ))}
      </Tree>
      <TreeScroll>
        <ChevronUp size={7} />
        <TreeThumb />
        <ChevronDown size={7} />
      </TreeScroll>
      <FilePane>
        <FileTable>
          <colgroup>
            <col />
            <col style={{ width: 114 }} />
            <col style={{ width: 74 }} />
          </colgroup>
          <thead>
            <tr>
              <FileHead $first>
                <HeadSpread>
                  名称
                  <ChevronUp size={7} />
                </HeadSpread>
              </FileHead>
              <FileHead>修改日期</FileHead>
              <FileHead>类型</FileHead>
            </tr>
          </thead>
          {fileGroups.map((g) => (
            <tbody key={g.title}>
              <tr>
                <GroupCell colSpan={3}>
                  <GroupToggle>
                    <ChevronDown />
                    {g.title}
                  </GroupToggle>
                </GroupCell>
              </tr>
              {g.files.map((f) => (
                <FileRow key={f.name} $selected={f.selected}>
                  <FileName>
                    <NameLine>
                      <FileIcon kind={f.kind} />
                      {f.name}
                    </NameLine>
                  </FileName>
                  <FileMeta>{f.date}</FileMeta>
                  <FileMeta>{typeNames[f.kind]}</FileMeta>
                </FileRow>
              ))}
            </tbody>
          ))}
        </FileTable>
        <FileScroll>
          <ChevronLeft size={7} />
          <FileThumb />
          <ChevronRight size={7} />
        </FileScroll>
      </FilePane>
    </ExplorerBody>
    <StatusBar>
      <StatusText>10 个项目</StatusText>
      <StatusText>选中 1 个项目  2.41 KB</StatusText>
      <ViewButtons>
        <DetailsView>
          <Line size={13} d="M1 1.500h3v2H1zM1 5h3v2H1zM1 8.500h3v2H1zM5.500 2.500H8M9 2.500h2.500M5.500 6H8M9 6h2.500M5.500 9.500H8M9 9.500h2.500" />
        </DetailsView>
        <Picture />
      </ViewButtons>
    </StatusBar>
  </Explorer>
);

const Ime = () => (
  <ImeBar>
    <ImeMode>中</ImeMode>
    <svg width="84" height="41" viewBox="0 0 84 41">
      <path d="M7 18c6 1 7 9-1 10 3-3 3-7 1-10z" fill="#5f88a6" />
      <path d="M16 29l4-2 2 1.500 2-1.500 4 2-1.500 3.500-1.500-.5v5h-6v-5l-1.500.5z" fill="#4c7695" />
      <g transform="translate(1 0)">
        <circle cx="49" cy="20" r="17" fill="#9fc7e2" />
        <path d="M34 15c5-13 24-13 30 0-8 6-20 8-30 0z" fill="#cfe6f4" />
        <circle cx="44" cy="14" r="4" fill="#eef7fc" />
        <path d="M32 22l11 2 12-1 10-1v5c-8 3-23 3-32 1z" fill="#456f92" />
        <path d="M36 31c8-2 18-2 26 0-6 8-20 8-26 0z" fill="#b9dcf1" />
        <path d="M49 8l7 3M54 5l-1 8M58 9l-3 6M49 31l6 6M56 30l-5 7M48 35h10" stroke="#f4fafd" strokeWidth="1.500" />
      </g>
    </svg>
  </ImeBar>
);

const DownloadShelf = () => (
  <Downloads>
    {["kaoshi.xls", "kaoshiMuBan.xls"].map((name) => (
      <DownloadItem key={name}>
        <OfficeFile tint="#3fa85a" />
        {name}
        <ChevronUp size={9} />
      </DownloadItem>
    ))}
    <ShowAll>全部显示</ShowAll>
    <Line size={9} w={1.8} d="M1 1l10 10M11 1 1 11" />
  </Downloads>
);

export default function App() {
  return (
    <Screen>
      <Global />
      <Stage>
        <BrowserChrome />
        <AppHeader>
          <span>管理员 admin</span>
          <a href="#">退出登录</a>
        </AppHeader>
        <AppBody>
          <SideMenu />
          <Main>
            <Crumbs>
              <CrumbHome href="#">首页</CrumbHome>
              <CrumbSlash>/</CrumbSlash>
              <span>考试</span>
            </Crumbs>
            <SearchForm>
              <label htmlFor="exam">考试</label>
              <SearchField id="exam" />
              <SearchButton type="button" />
            </SearchForm>
            <ExamTable />
          </Main>
          <PageScroll>
            <PageThumb />
            <Drop />
          </PageScroll>
        </AppBody>
        <DownloadShelf />
        <ExplorerWindow />
        <Pointer>
          <svg width="38" height="38" viewBox="0 0 38 38">
            <circle cx="19" cy="19" r="18.500" fill="#ff7869" fillOpacity=".9" />
            <path d="M19.500 19v13l3-2.700 2 4.700 2.200-1-2-4.500h4z" fill="#ff8a7c" stroke="#6e1d16" strokeWidth="1.100" />
          </svg>
        </Pointer>
        <Watermark>毕设代做</Watermark>
        <Ime />
      </Stage>
      <PlayerGap />
      <PlayerBar>
        <Progress type="range" defaultValue={70} $fill={70} $rest="#3a3a3a" $knob="#ffe100" />
        <VolumeIcon>
          <svg width="16" height="14" viewBox="0 0 16 14">
            <path d="M0 4h4l5-4v14l-5-4H0z" fill="#858585" />
            <path d="M11.500 4v6M14.500 2v10" stroke="#6a6a6a" />
          </svg>
        </VolumeIcon>
        <Volume type="range" defaultValue={44} $fill={44} $rest="#000" $knob="#e6e6e6" />
      </PlayerBar>
      <PlayerFoot>
        <FootCell />
        <FootCell />
        <FootCell />
        <FootCell />
        <FootCell />
        <FootCell $grow />
        <FootCell />
      </PlayerFoot>
    </Screen>
  );
}
